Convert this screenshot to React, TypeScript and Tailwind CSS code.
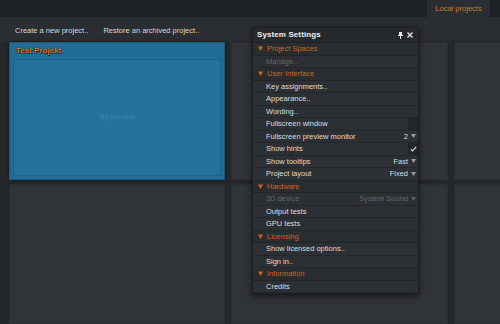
import React from "react";

type Row =
  | { kind: "head"; label: string }
  | { kind: "item"; label: string; value?: string; dim?: boolean; drop?: boolean; box?: boolean; check?: boolean };

const rows: Row[] = [
  { kind: "head", label: "Project Spaces" },
  { kind: "item", label: "Manage..", dim: true },
  { kind: "head", label: "User Interface" },
  { kind: "item", label: "Key assignments.." },
  { kind: "item", label: "Appearance.." },
  { kind: "item", label: "Wording.." },
  { kind: "item", label: "Fullscreen window", box: true },
  { kind: "item", label: "Fullscreen preview monitor", value: "2", drop: true },
  { kind: "item", label: "Show hints", box: true, check: true },
  { kind: "item", label: "Show tooltips", value: "Fast", drop: true },
  { kind: "item", label: "Project layout", value: "Fixed", drop: true },
  { kind: "head", label: "Hardware" },
  { kind: "item", label: "3D device", value: "System Sound", drop: true, dim: true },
  { kind: "item", label: "Output tests" },
  { kind: "item", label: "GPU tests" },
  { kind: "head", label: "Licensing" },
  { kind: "item", label: "Show licensed options.." },
  { kind: "item", label: "Sign in.." },
  { kind: "head", label: "Information" },
  { kind: "item", label: "Credits" },
];

function Tri({ dim }: { dim?: boolean }) {
  return (
    <svg width="5" height="4" viewBox="0 0 5 4" className="shrink-0">
      <path d="M0 0 L5 0 L2.5 4 Z" fill={dim ? "#5c5f63" : "#9a9da1"} />
    </svg>
  );
}

function SettingsPanel() {
  return (
    <div className="absolute left-[252px] top-[27px] w-[167px] bg-[#2b2e32] border border-[#1c1e21] shadow-[0_2px_6px_rgba(0,0,0,0.6)]">
      {/* titel */}
      <div className="h-[15px] flex items-center pl-[4px] pr-[5px] bg-[#26292c] border-b border-[#1f2124]">
        <span className="text-[8px] font-bold text-[#eeeeee] tracking-[0.1px]">System Settings</span>
        <div className="ml-auto flex items-center gap-[4px]">
          <svg width="5" height="7" viewBox="0 0 5 7">
            <rect x="1" y="0" width="3" height="4" fill="#e6e6e6" />
            <rect x="0" y="3" width="5" height="1" fill="#e6e6e6" />
            <rect x="2" y="4" width="1" height="3" fill="#e6e6e6" />
          </svg>
          <svg width="6" height="6" viewBox="0 0 6 6">
            <path d="M0.5 0.5 L5.5 5.5 M5.5 0.5 L0.5 5.5" stroke="#e6e6e6" strokeWidth="1.4" />
          </svg>
        </div>
      </div>
      {rows.map((r, i) =>
        r.kind === "head" ? (
          <div key={i} className="h-[12.5px] flex items-center gap-[4px] pl-[5px] bg-[#2a2d30] border-b border-[#222528]">
            <svg width="5" height="5" viewBox="0 0 5 5">
              <path d="M0 0.5 L5 0.5 L2.5 5 Z" fill="#c9641f" />
            </svg>
            <span className="text-[7.5px] text-[#c9641f] leading-none">{r.label}</span>
          </div>
        ) : (
          <div key={i} className="h-[12.5px] flex items-center pl-[13px] bg-[#2c2f33] border-b border-[#24272a]">
            <span className={`text-[7.5px] leading-none ${r.dim ? "text-[#65686c]" : "text-[#dedede]"}`}>{r.label}</span>
            <div className="ml-auto flex items-center h-full">
              {r.value && (
                <span className={`text-[7.5px] leading-none ${r.dim ? "text-[#65686c]" : "text-[#dedede]"}`}>{r.value}</span>
              )}
              {r.drop && (
                <span className="w-[10px] flex justify-center">
                  <Tri dim={r.dim} />
                </span>
              )}
              {r.box && (
                <span className="w-[10px] h-full bg-[#232629] flex items-center justify-center">
                  {r.check && (
                    <svg width="7" height="6" viewBox="0 0 7 6">
                      <path d="M0.8 3.2 L2.6 5 L6.2 0.8" stroke="#e8e8e8" strokeWidth="1.1" fill="none" />
                    </svg>
                  )}
                </span>
              )}
            </div>
          </div>
        )
      )}
    </div>
  );
}

function Cell({ selected }: { selected?: boolean }) {
  if (selected) {
    return (
      <div className="bg-[#226d95] border border-[#1b5a7c] shadow-[0_0_3px_rgba(0,0,0,0.6)] flex flex-col px-[3px] pb-[3px]">
        <div className="h-[16px] flex items-center pl-[3px]">
          <span className="text-[8px] font-bold text-[#e8731f] [text-shadow:0_0_1px_#000,1px_1px_0_#0d2f42]">Test Projekt</span>
        </div>
        <div className="flex-1 bg-[#24739e] border border-[#1c6187] flex items-center justify-center">
          <span className="text-[7px] text-[#3c86ad]">No preview</span>
        </div>
      </div>
    );
  }
  return <div className="bg-[#303338] border border-[#2a2d31]" />;
}

export default function App() {
  return (
    <div
      className="w-[500px] h-[324px] overflow-hidden bg-[#24272b] relative flex flex-col"
      style={{ fontFamily: '"Liberation Sans", Arial, sans-serif' }}
    >
      {/* top bar */}
      <div className="h-[17px] bg-[#1f2225] flex justify-end pr-[10px] shrink-0">
        <div className="w-[63px] bg-[#2a2d31] flex items-center justify-center">
          <span className="text-[7.5px] text-[#d27a34]">Local projects</span>
        </div>
      </div>
      {/* toolbar */}
      <div className="h-[24px] bg-[#2a2d31] flex items-center gap-[15px] pl-[15px] pt-[3px] shrink-0">
        <span className="text-[7.5px] text-[#d9d9d9]">Create a new project..</span>
        <span className="text-[7.5px] text-[#d9d9d9]">Restore an archived project..</span>
      </div>
      {/* grid */}
      <div className="flex-1 grid grid-cols-[216px_217px_217px] grid-rows-[138px_140px] gap-x-[6px] gap-y-[4px] pl-[9px] pt-[1px]">
        <Cell selected />
        <Cell />
        <Cell />
        <Cell />
        <Cell />
        <Cell />
      </div>
      <SettingsPanel />
    </div>
  );
}
